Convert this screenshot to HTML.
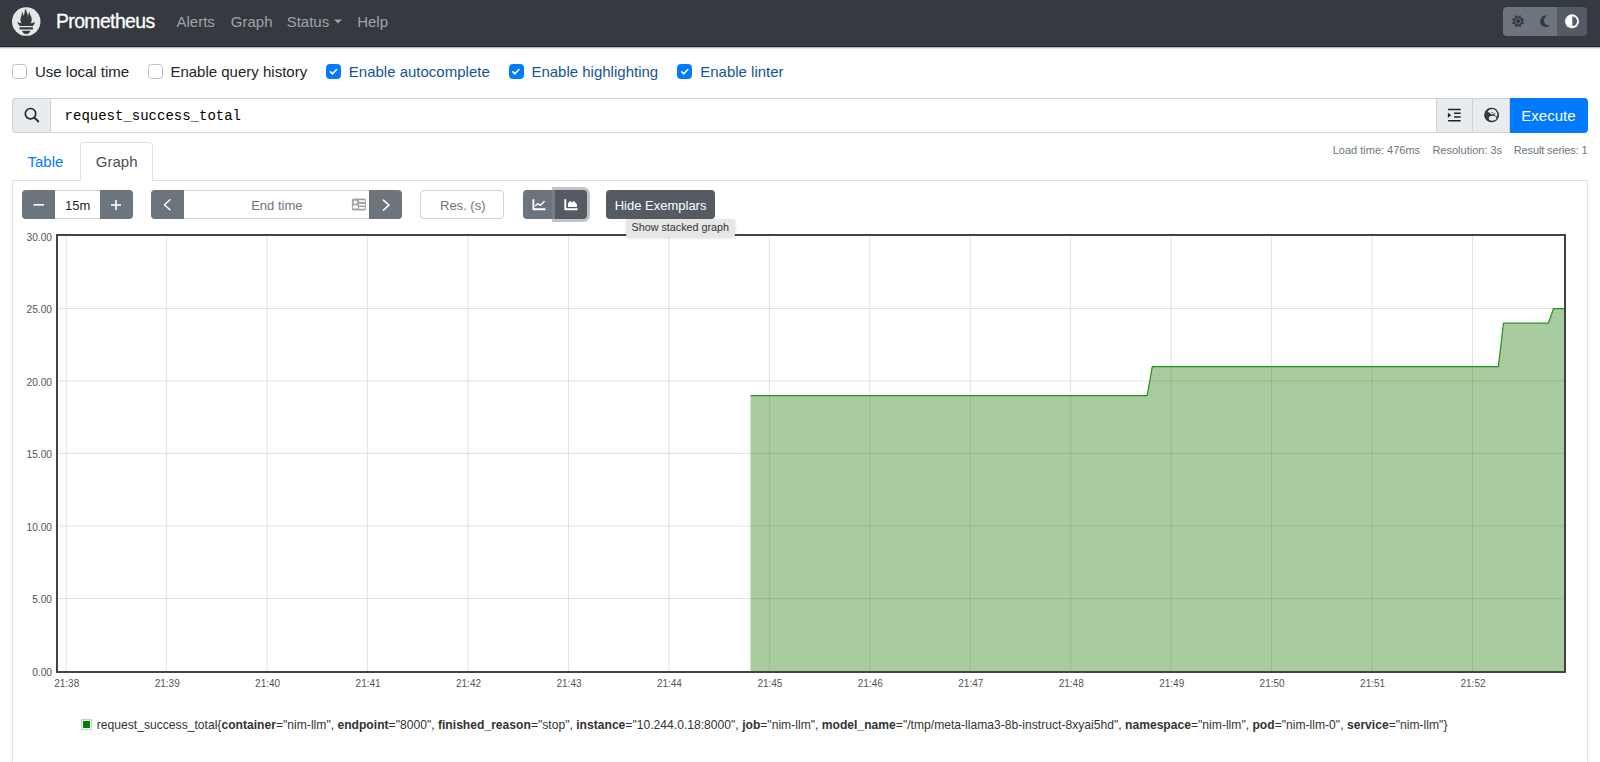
<!DOCTYPE html>
<html><head><meta charset="utf-8">
<style>
*{box-sizing:border-box}
html,body{margin:0;padding:0;width:1600px;height:762px;overflow:hidden;background:#fff;font-family:"Liberation Sans",sans-serif;color:#212529}
.a{position:absolute;white-space:nowrap;line-height:1}
#nav{position:absolute;left:0;top:0;width:1600px;height:47px;background:#343a40;border-bottom:1px solid #22262b}
#navsh{position:absolute;left:0;top:47px;width:1600px;height:1.5px;background:linear-gradient(#a0a2a5,#fff)}
.nl{color:#a0a3a7;font-size:15px}
.cb{position:absolute;top:64px;width:15px;height:15px;border:1px solid #b9c0c8;border-radius:3.5px;background:#fff}
.cb.on{background:#007bff;border-color:#007bff}
.cbt{font-size:15px;color:#212529}
.cbt.on{color:#155593}
.bx{position:absolute}
</style></head><body>
<div id="nav"></div>
<div id="navsh"></div>
<svg class="bx" style="left:12.3px;top:6.7px" width="29" height="29" viewBox="0 0 115.333 114">
<circle cx="56.667" cy="57.332" r="56.666" fill="#e6e6e6"/>
<path fill="#343a40" d="M56.667,106.722c-8.904,0-16.123-5.948-16.123-13.283H72.79C72.79,100.773,65.571,106.722,56.667,106.722z M83.297,89.04H30.034v-9.658h53.264V89.04z M83.106,74.411h-52.92c-0.176-0.203-0.356-0.403-0.526-0.609c-5.452-6.62-6.736-10.076-7.983-13.598c-0.021-0.116,6.611,1.355,11.314,2.413c0,0,2.42,0.56,5.958,1.205c-3.397-3.982-5.414-9.044-5.414-14.218c0-11.359,8.712-21.285,5.569-30.308c3.059,0.249,6.331,6.456,6.552,16.161c3.252-4.494,4.613-12.701,4.613-17.733c0-5.21,3.433-11.262,6.867-11.469c-3.061,5.045,0.793,9.37,4.219,20.099c1.285,4.03,1.121,10.812,2.113,15.113C63.797,33.534,65.333,20.5,71,16c-2.5,5.667,0.37,12.758,2.333,16.167c3.167,5.5,5.087,9.667,5.087,17.548c0,5.284-1.951,10.259-5.242,14.148c3.742-0.702,6.326-1.335,6.326-1.335l12.152-2.371C91.657,60.156,89.891,67.418,83.106,74.411z"/>
</svg>
<div class="a" id="brand" style="left:56px;top:11.8px;font-size:19.4px;letter-spacing:-0.6px;color:#fff;-webkit-text-stroke:0.3px #fff">Prometheus</div>
<div class="a nl" id="n1" style="left:176.5px;top:13.9px">Alerts</div>
<div class="a nl" id="n2" style="left:230.8px;top:13.9px">Graph</div>
<div class="a nl" id="n3" style="left:286.7px;top:13.9px">Status</div>
<svg class="bx" style="left:334px;top:18.8px" width="8" height="5"><path d="M0 0.5H8L4 4.5Z" fill="#a0a3a7"/></svg>
<div class="a nl" id="n4" style="left:357.2px;top:13.9px">Help</div>

<!-- theme toggle -->
<div class="bx" style="left:1503px;top:7px;width:54px;height:29px;background:#6c757d;border-radius:4px 0 0 4px"></div>
<div class="bx" style="left:1557px;top:7px;width:30px;height:29px;background:#545b62;border-radius:0 4px 4px 0"></div>

<!-- checkboxes -->
<div class="cb" style="left:12px"></div>
<div class="a cbt" id="c1" style="left:35px;top:64.1px">Use local time</div>
<div class="cb" style="left:147.5px"></div>
<div class="a cbt" id="c2" style="left:170.4px;top:64.1px">Enable query history</div>
<div class="cb on" style="left:326.2px"></div>
<div class="a cbt on" id="c3" style="left:348.8px;top:64.1px">Enable autocomplete</div>
<div class="cb on" style="left:508.6px"></div>
<div class="a cbt on" id="c4" style="left:531.4px;top:64.1px">Enable highlighting</div>
<div class="cb on" style="left:677.4px"></div>
<div class="a cbt on" id="c5" style="left:700.2px;top:64.1px">Enable linter</div>

<!-- input group -->
<div class="bx" style="left:12px;top:98px;width:1576px;height:35px;border:1px solid #ced4da;border-radius:4px;background:#fff"></div>
<div class="bx" style="left:12px;top:98px;width:39px;height:35px;border:1px solid #ced4da;border-radius:4px 0 0 4px;background:#e9ecef"></div>
<div class="bx" style="left:1436px;top:98px;width:37px;height:35px;border:1px solid #ced4da;background:#e9ecef"></div>
<div class="bx" style="left:1473px;top:98px;width:37px;height:35px;border:1px solid #ced4da;border-left:none;background:#e9ecef"></div>
<div class="bx" style="left:1510px;top:98px;width:78px;height:35px;background:#007bff;border-radius:0 4px 4px 0"></div>
<div class="a" id="qtext" style="left:64.6px;top:109px;font-family:'Liberation Mono',monospace;font-size:14px;color:#000">request_success_total</div>
<div class="a" id="exec" style="left:1521.3px;top:108.3px;font-size:15px;color:#fff">Execute</div>

<!-- tabs -->
<div class="bx" style="left:12px;top:180px;width:1576px;height:600px;border:1px solid #dee2e6;border-radius:0"></div>
<div class="bx" style="left:80px;top:142px;width:73px;height:39px;border:1px solid #dee2e6;border-bottom:none;border-radius:4px 4px 0 0;background:#fff"></div>
<div class="a" id="ttable" style="left:27.5px;top:154.3px;font-size:15px;color:#007bff">Table</div>
<div class="a" id="tgraph" style="left:95.8px;top:154.3px;font-size:15px;color:#495057">Graph</div>
<div class="a" id="s1" style="left:1332.7px;top:144.5px;font-size:11px;color:#6c757d">Load time: 476ms</div>
<div class="a" id="s2" style="left:1432.4px;top:144.5px;font-size:11px;color:#6c757d">Resolution: 3s</div>
<div class="a" id="s3" style="left:1513.7px;top:144.5px;font-size:11px;letter-spacing:-0.12px;color:#6c757d">Result series: 1</div>

<!-- controls -->
<div class="bx" style="left:22px;top:190px;width:111px;height:29px;border:1px solid #ced4da;border-radius:4px;background:#fff"></div>
<div class="bx" style="left:22px;top:190px;width:33px;height:29px;background:#6c757d;border-radius:4px 0 0 4px"></div>
<div class="bx" style="left:100px;top:190px;width:33px;height:29px;background:#6c757d;border-radius:0 4px 4px 0"></div>
<div class="a" id="r15" style="left:65px;top:198.6px;font-size:13px;color:#212529">15m</div>

<div class="bx" style="left:151px;top:190px;width:250.5px;height:29px;border:1px solid #ced4da;border-radius:4px;background:#fff"></div>
<div class="bx" style="left:151px;top:190px;width:33px;height:29px;background:#6c757d;border-radius:4px 0 0 4px"></div>
<div class="bx" style="left:369px;top:190px;width:32.5px;height:29px;background:#6c757d;border-radius:0 4px 4px 0"></div>
<div class="a" id="endt" style="left:251.2px;top:199px;font-size:13px;color:#6c757d">End time</div>

<div class="bx" style="left:420px;top:190px;width:84px;height:29px;border:1px solid #ced4da;border-radius:4px;background:#fff"></div>
<div class="a" id="res" style="left:440px;top:199px;font-size:13px;color:#6c757d">Res. (s)</div>

<div class="bx" style="left:523px;top:190px;width:32px;height:29px;background:#6c757d;border-radius:4px 0 0 4px"></div>
<div class="bx" style="left:555px;top:190px;width:32px;height:29px;background:#545b62;border-radius:0 4px 4px 0;box-shadow:0 0 0 3px rgba(130,138,145,.5)"></div>

<div class="bx" style="left:606px;top:190px;width:109px;height:29px;background:#545b62;border-radius:4px"></div>
<div class="a" id="hide" style="left:614.7px;top:198.7px;font-size:13px;color:#fff">Hide Exemplars</div>

<!-- chart -->
<svg id="chart" class="bx" style="left:0;top:0" width="1600" height="762">
<line x1="66.2" y1="236" x2="66.2" y2="671" stroke="rgba(0,0,0,0.11)" stroke-width="1"/>
<line x1="166.7" y1="236" x2="166.7" y2="671" stroke="rgba(0,0,0,0.11)" stroke-width="1"/>
<line x1="267.1" y1="236" x2="267.1" y2="671" stroke="rgba(0,0,0,0.11)" stroke-width="1"/>
<line x1="367.6" y1="236" x2="367.6" y2="671" stroke="rgba(0,0,0,0.11)" stroke-width="1"/>
<line x1="468.0" y1="236" x2="468.0" y2="671" stroke="rgba(0,0,0,0.11)" stroke-width="1"/>
<line x1="568.5" y1="236" x2="568.5" y2="671" stroke="rgba(0,0,0,0.11)" stroke-width="1"/>
<line x1="668.9" y1="236" x2="668.9" y2="671" stroke="rgba(0,0,0,0.11)" stroke-width="1"/>
<line x1="769.4" y1="236" x2="769.4" y2="671" stroke="rgba(0,0,0,0.11)" stroke-width="1"/>
<line x1="869.8" y1="236" x2="869.8" y2="671" stroke="rgba(0,0,0,0.11)" stroke-width="1"/>
<line x1="970.3" y1="236" x2="970.3" y2="671" stroke="rgba(0,0,0,0.11)" stroke-width="1"/>
<line x1="1070.7" y1="236" x2="1070.7" y2="671" stroke="rgba(0,0,0,0.11)" stroke-width="1"/>
<line x1="1171.2" y1="236" x2="1171.2" y2="671" stroke="rgba(0,0,0,0.11)" stroke-width="1"/>
<line x1="1271.6" y1="236" x2="1271.6" y2="671" stroke="rgba(0,0,0,0.11)" stroke-width="1"/>
<line x1="1372.1" y1="236" x2="1372.1" y2="671" stroke="rgba(0,0,0,0.11)" stroke-width="1"/>
<line x1="1472.5" y1="236" x2="1472.5" y2="671" stroke="rgba(0,0,0,0.11)" stroke-width="1"/>
<line x1="58" y1="308.5" x2="1564" y2="308.5" stroke="rgba(0,0,0,0.11)" stroke-width="1"/>
<line x1="58" y1="381.0" x2="1564" y2="381.0" stroke="rgba(0,0,0,0.11)" stroke-width="1"/>
<line x1="58" y1="453.5" x2="1564" y2="453.5" stroke="rgba(0,0,0,0.11)" stroke-width="1"/>
<line x1="58" y1="526.0" x2="1564" y2="526.0" stroke="rgba(0,0,0,0.11)" stroke-width="1"/>
<line x1="58" y1="598.5" x2="1564" y2="598.5" stroke="rgba(0,0,0,0.11)" stroke-width="1"/>
<path d="M750.5,671 L750.50,395.50 1147.20,395.50 1152.30,366.50 1498.40,366.50 1503.50,323.00 1548.40,323.00 1553.60,308.50 1564.00,308.50 L1564,671 Z" fill="rgb(38,128,18)" fill-opacity="0.4"/>
<polyline points="750.50,395.50 1147.20,395.50 1152.30,366.50 1498.40,366.50 1503.50,323.00 1548.40,323.00 1553.60,308.50 1564.00,308.50" fill="none" stroke="#229322" stroke-width="1.25" stroke-linejoin="round"/>
<rect x="57" y="235" width="1508" height="437" fill="none" stroke="#434343" stroke-width="2"/>
<text x="52" y="240.6" text-anchor="end" font-size="10.2" fill="#545454">30.00</text>
<text x="52" y="313.1" text-anchor="end" font-size="10.2" fill="#545454">25.00</text>
<text x="52" y="385.6" text-anchor="end" font-size="10.2" fill="#545454">20.00</text>
<text x="52" y="458.1" text-anchor="end" font-size="10.2" fill="#545454">15.00</text>
<text x="52" y="530.6" text-anchor="end" font-size="10.2" fill="#545454">10.00</text>
<text x="52" y="603.1" text-anchor="end" font-size="10.2" fill="#545454">5.00</text>
<text x="52" y="675.6" text-anchor="end" font-size="10.2" fill="#545454">0.00</text>
<text x="66.7" y="687" text-anchor="middle" font-size="10" fill="#545454">21:38</text>
<text x="167.2" y="687" text-anchor="middle" font-size="10" fill="#545454">21:39</text>
<text x="267.6" y="687" text-anchor="middle" font-size="10" fill="#545454">21:40</text>
<text x="368.1" y="687" text-anchor="middle" font-size="10" fill="#545454">21:41</text>
<text x="468.5" y="687" text-anchor="middle" font-size="10" fill="#545454">21:42</text>
<text x="569.0" y="687" text-anchor="middle" font-size="10" fill="#545454">21:43</text>
<text x="669.4" y="687" text-anchor="middle" font-size="10" fill="#545454">21:44</text>
<text x="769.9" y="687" text-anchor="middle" font-size="10" fill="#545454">21:45</text>
<text x="870.3" y="687" text-anchor="middle" font-size="10" fill="#545454">21:46</text>
<text x="970.8" y="687" text-anchor="middle" font-size="10" fill="#545454">21:47</text>
<text x="1071.2" y="687" text-anchor="middle" font-size="10" fill="#545454">21:48</text>
<text x="1171.7" y="687" text-anchor="middle" font-size="10" fill="#545454">21:49</text>
<text x="1272.1" y="687" text-anchor="middle" font-size="10" fill="#545454">21:50</text>
<text x="1372.6" y="687" text-anchor="middle" font-size="10" fill="#545454">21:51</text>
<text x="1473.0" y="687" text-anchor="middle" font-size="10" fill="#545454">21:52</text>
</svg>


<!-- legend -->
<div class="bx" style="left:80.5px;top:719px;width:11px;height:11px;border:1px solid #ccc;background:#fff"></div>
<div class="bx" style="left:82.5px;top:721px;width:7px;height:7px;background:#008000"></div>
<div class="a" id="leg" style="left:96.8px;top:719.2px;font-size:12.1px;letter-spacing:0.011px;color:#333">request_success_total{<b>container</b>="nim-llm", <b>endpoint</b>="8000", <b>finished_reason</b>="stop", <b>instance</b>="10.244.0.18:8000", <b>job</b>="nim-llm", <b>model_name</b>="/tmp/meta-llama3-8b-instruct-8xyai5hd", <b>namespace</b>="nim-llm", <b>pod</b>="nim-llm-0", <b>service</b>="nim-llm"}</div>

<!-- tooltip -->
<div class="bx" style="left:625.5px;top:219px;width:109.6px;height:18.4px;background:#e6e6e6;border-radius:3px;box-shadow:0 1px 3px rgba(0,0,0,.15)"></div>
<div class="a" id="tip" style="left:631.6px;top:222.3px;font-size:10.75px;color:#333">Show stacked graph</div>

<!-- icons -->
<svg class="bx" style="left:0;top:0" width="1600" height="240">
<g fill="none" stroke="#fff" stroke-width="1.65" stroke-linecap="round" stroke-linejoin="round">
<polyline points="330.5,71.8 332.5,73.8 336.6,69.5"/>
<polyline points="512.9,71.8 514.9,73.8 519.0,69.5"/>
<polyline points="681.7,71.8 683.7,73.8 687.8,69.5"/>
</g>
<!-- search -->
<circle cx="30.5" cy="113.7" r="5.2" fill="none" stroke="#212529" stroke-width="1.65"/>
<line x1="34.4" y1="117.6" x2="38.3" y2="121.5" stroke="#212529" stroke-width="1.8" stroke-linecap="round"/>
<!-- format -->
<g stroke="#212529" stroke-width="1.5" stroke-linecap="round">
<line x1="1448.6" y1="109.5" x2="1460.1" y2="109.5"/>
<line x1="1454.6" y1="113.3" x2="1460.1" y2="113.3"/>
<line x1="1454.6" y1="117.1" x2="1460.1" y2="117.1"/>
<line x1="1448.6" y1="120.8" x2="1460.1" y2="120.8"/>
</g>
<path d="M1447.9,112.7 L1451.3,115.2 L1447.9,117.8Z" fill="#212529"/>
<!-- globe -->
<circle cx="1491.6" cy="115" r="7.2" fill="#343a40"/>
<ellipse cx="1492.6" cy="118.2" rx="3.8" ry="2.5" fill="#e9ecef"/>
<path d="M1487.8,111.2 L1489.7,109.4 L1493.6,109 L1496.4,111 L1497.6,115 L1496.7,116.6 L1495.2,115.5 L1493.6,113.8 L1492,114.5 L1490.4,113.7 L1489.7,112.6 L1488.1,112.2Z" fill="#e9ecef"/>
<circle cx="1491.6" cy="115" r="6.75" fill="none" stroke="#343a40" stroke-width="1.1"/><circle cx="1492.3" cy="112.6" r="0.7" fill="#343a40"/><circle cx="1494.6" cy="113.6" r="0.7" fill="#343a40"/>
<!-- minus plus -->
<g stroke="#fff" stroke-width="1.6" stroke-linecap="butt">
<line x1="33.5" y1="204.8" x2="44" y2="204.8"/>
<line x1="111" y1="205" x2="121" y2="205"/>
<line x1="116" y1="200" x2="116" y2="210"/>
</g>
<g fill="none" stroke="#fff" stroke-width="1.5" stroke-linecap="round" stroke-linejoin="round">
<polyline points="170,199.7 164.4,204.7 170,209.7"/>
<polyline points="383.4,200.1 389,205.1 383.4,210.1"/>
</g>
<!-- address card -->
<rect x="351.9" y="198.6" width="14" height="12" rx="1.6" fill="#a3a3a3"/>
<circle cx="355.3" cy="202.2" r="1.8" fill="#fff"/>
<path d="M352.9,208.6 L352.9,206.6 Q353.2,205.3 354.5,205.3 L356.4,205.3 Q357.8,205.3 358,206.6 L358,208.6Z" fill="#fff"/>
<rect x="359" y="200.3" width="6" height="1.6" fill="#fff"/>
<rect x="359" y="204" width="6" height="1.5" fill="#fff"/>
<rect x="359" y="207.1" width="6" height="1.6" fill="#fff"/>
<!-- chart icons -->
<g fill="none" stroke="#fff" stroke-width="1.9" stroke-linecap="round" stroke-linejoin="round">
<polyline points="533.4,199.9 533.4,209.3 544.7,209.3"/>
<polyline points="565.3,199.9 565.3,209.3 576.8,209.3"/>
</g>
<polyline points="535.6,205.5 537.7,203.7 540.5,205.3 544.2,201.4" fill="none" stroke="#fff" stroke-width="1.4" stroke-linecap="round" stroke-linejoin="round"/>
<path d="M568,207 L568,203.5 Q568.6,201.6 570.3,200.9 L571.9,202.6 L573.5,200.9 Q575.2,201.5 575.6,203 L577,204.2 L577,207Z" fill="#fff"/>
<!-- sun moon contrast -->
<path fill="#343a40" d="M1520.60,14.97 L1521.11,18.14 L1524.28,18.65 L1522.40,21.25 L1524.28,23.85 L1521.11,24.36 L1520.60,27.53 L1518.00,25.65 L1515.40,27.53 L1514.89,24.36 L1511.72,23.85 L1513.60,21.25 L1511.72,18.65 L1514.89,18.14 L1515.40,14.97 L1518.00,16.85Z"/>
<circle cx="1518" cy="21.25" r="2.75" fill="none" stroke="#6c757d" stroke-width="0.9"/>
<path fill="#343a40" d="M1547.3,15.9 A5.66,5.66 0 1 0 1549.9,25.2 A4.83,4.83 0 0 1 1547.3,15.9Z"/>
<circle cx="1572" cy="21.3" r="6.95" fill="#fff"/>
<path d="M1572.3,16.5 A4.8,4.8 0 0 1 1572.3,26.1Z" fill="#545b62"/>
</svg>
</body></html>
